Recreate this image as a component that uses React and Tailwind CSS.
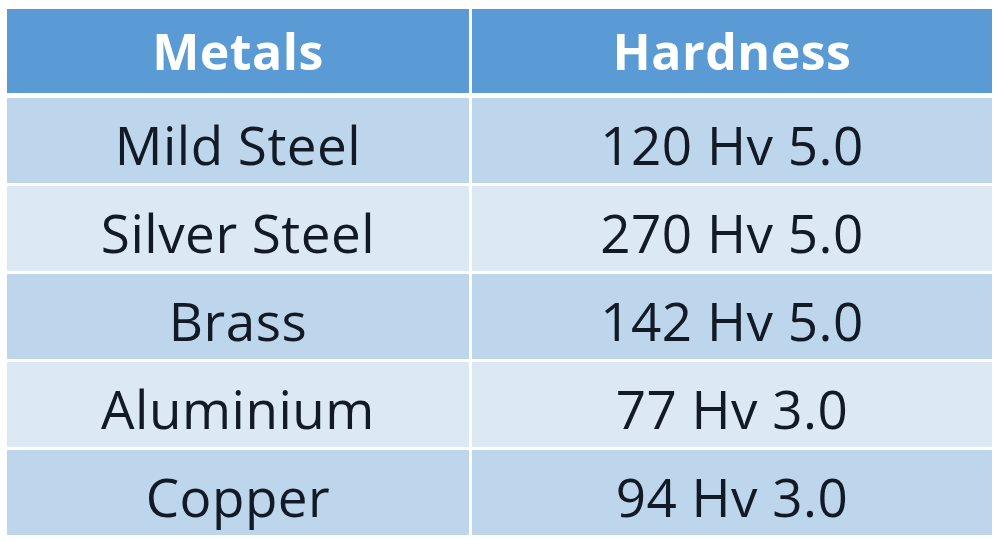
const rows = [
  ["Mild Steel", "120 Hv 5.0"],
  ["Silver Steel", "270 Hv 5.0"],
  ["Brass", "142 Hv 5.0"],
  ["Aluminium", "77 Hv 3.0"],
  ["Copper", "94 Hv 3.0"],
];

export default function App() {
  return (
    <div className="h-[542px] w-[1000px] bg-white pl-[7px] pr-[8px] pt-[9px] font-['Open_Sans',sans-serif]">
      <div className="grid grid-cols-[462px_1fr] gap-x-[3px]">
        <div className="flex h-[84px] items-center justify-center bg-[#5b9bd5] text-[50px] font-bold tracking-[0.5px] text-white">
          Metals
        </div>
        <div className="flex h-[84px] items-center justify-center bg-[#5b9bd5] text-[50px] font-bold tracking-[0.5px] text-white">
          Hardness
        </div>
      </div>
      <div className="mt-[5px] flex flex-col gap-[3px]">
        {rows.map(([metal, hardness], i) => (
          <div key={metal} className="grid grid-cols-[462px_1fr] gap-x-[3px]">
            <div
              className={
                i % 2 === 0
                  ? "flex h-[85px] items-center justify-center bg-[#bed6ec] pt-[8px] text-[53px] tracking-[0.5px] text-[#111a26]"
                  : "flex h-[85px] items-center justify-center bg-[#dce9f5] pt-[8px] text-[53px] tracking-[0.5px] text-[#111a26]"
              }
            >
              {metal}
            </div>
            <div
              className={
                i % 2 === 0
                  ? "flex h-[85px] items-center justify-center bg-[#bed6ec] pt-[8px] text-[53px] tracking-[0.5px] text-[#111a26]"
                  : "flex h-[85px] items-center justify-center bg-[#dce9f5] pt-[8px] text-[53px] tracking-[0.5px] text-[#111a26]"
              }
            >
              {hardness}
            </div>
          </div>
        ))}
      </div>
    </div>
  );
}
